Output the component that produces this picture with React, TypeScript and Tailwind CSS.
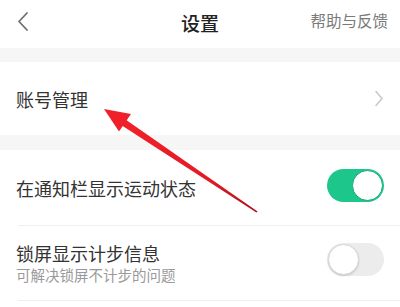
import React from "react";

function Toggle({ on }: { on: boolean }) {
  return on ? (
    <div className="relative w-[57px] h-[33px] rounded-full bg-[#1dc78c]">
      <div className="absolute right-[1px] top-[1px] w-[31px] h-[31px] rounded-full bg-white border border-[#17a873]" />
    </div>
  ) : (
    <div className="relative w-[57px] h-[33px] rounded-full bg-[#ececec]">
      <div className="absolute left-[1px] top-[1px] w-[31px] h-[31px] rounded-full bg-white border border-[#d6d6d6] shadow-[0_1px_2px_rgba(0,0,0,0.15)]" />
    </div>
  );
}

export default function App() {
  return (
    <div
      className="relative w-[400px] h-[307px] overflow-hidden bg-white"
      style={{ fontFamily: '"Noto Sans CJK SC", "Noto Sans", sans-serif' }}
    >
      {/* Header */}
      <div className="relative h-[48px] flex items-center justify-center">
        <svg className="absolute left-[15px] top-[11px]" width="16" height="21" viewBox="0 0 16 21">
          <path d="M12 2 L4 10.5 L12 19" fill="none" stroke="#6f6f6f" strokeWidth="1.8" strokeLinecap="round" strokeLinejoin="round" />
        </svg>
        <div className="text-[19px] leading-[24px] font-medium text-[#222] mt-[-3px]">设置</div>
        <div className="absolute right-[12px] top-[9px] text-[15.5px] leading-[22px] text-[#7a7a7a]">帮助与反馈</div>
      </div>
      <div className="h-[14px] bg-[#f6f6f6]" />
      {/* Account row */}
      <div className="h-[73px] flex items-center justify-between pl-[16px] pr-[16px]">
        <div className="text-[18px] leading-[24px] text-[#333]">账号管理</div>
        <svg width="10" height="17" viewBox="0 0 10 17">
          <path d="M2 1.5 L8 8.5 L2 15.5" fill="none" stroke="#c8c8c8" strokeWidth="1.5" strokeLinecap="round" strokeLinejoin="round" />
        </svg>
      </div>
      <div className="h-[15px] bg-[#f6f6f6]" />
      {/* Notification row */}
      <div className="h-[75px] flex items-center justify-between pl-[16px] pr-[16px]">
        <div className="text-[18px] leading-[24px] text-[#333]">在通知栏显示运动状态</div>
        <div className="mt-[-4px]">
          <Toggle on={true} />
        </div>
      </div>
      <div className="h-px bg-[#efefef] ml-[18px]" />
      {/* Lock screen row */}
      <div className="h-[74px] flex items-center justify-between pl-[16px] pr-[16px]">
        <div className="flex flex-col">
          <div className="text-[18px] leading-[24px] text-[#333]">锁屏显示计步信息</div>
          <div className="text-[14.5px] leading-[20px] text-[#9a9a9a]">可解决锁屏不计步的问题</div>
        </div>
        <div className="mt-[-8px]">
          <Toggle on={false} />
        </div>
      </div>
      <div className="h-px bg-[#efefef] ml-[18px]" />

      {/* Red arrow annotation */}
      <svg className="absolute left-0 top-0 pointer-events-none" width="400" height="307" viewBox="0 0 400 307">
        <defs>
          <linearGradient id="ag" x1="104" y1="109" x2="257" y2="212" gradientUnits="userSpaceOnUse">
            <stop offset="0" stopColor="#f5222b" />
            <stop offset="0.7" stopColor="#e01b24" />
            <stop offset="1" stopColor="#a8101a" />
          </linearGradient>
        </defs>
        <polygon points="120.3,124.5 123.7,118.3 257.6,211.6 256.4,212.4" fill="url(#ag)" />
        <polygon points="104,109 131,114 119,131.5" fill="#f0202a" />
      </svg>
    </div>
  );
}
